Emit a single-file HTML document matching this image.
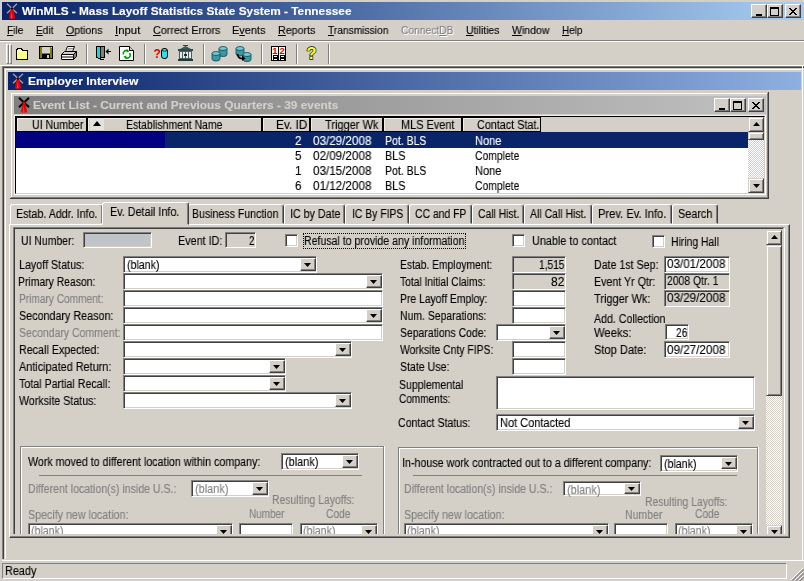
<!DOCTYPE html>
<html><head><meta charset="utf-8"><title>WinMLS</title>
<style>
html,body{margin:0;padding:0}
body{background:#d4d0c8;width:804px;height:581px;overflow:hidden;position:relative;font-family:"Liberation Sans",sans-serif;font-size:12px}
div,svg,i,.t{position:absolute;display:block}
.sk{box-sizing:border-box;border:1px solid;border-color:#808080 #fff #fff #808080;box-shadow:inset 1px 1px 0 #404040,inset -1px -1px 0 #d4d0c8}
.rb{box-sizing:border-box;background:#d4d0c8;border:1px solid;border-color:#fff #404040 #404040 #fff;box-shadow:inset -1px -1px 0 #808080}
.sb{box-sizing:border-box;background:#d4d0c8;border:1px solid;border-color:#d4d0c8 #404040 #404040 #d4d0c8;box-shadow:inset 1px 1px 0 #fff,inset -1px -1px 0 #808080}
.nb{border-bottom:0;box-shadow:inset 1px 1px 0 #fff,inset -1px 0 0 #808080}
.tab{box-sizing:border-box;border:1px solid;border-color:#fff #404040 transparent #fff;border-radius:3px 3px 0 0;box-shadow:inset -1px 0 0 #808080}
.t{white-space:nowrap;line-height:16px;height:16px;will-change:transform;-webkit-text-stroke:0.12px}
u{text-decoration:underline;text-underline-offset:1px}
</style></head>
<body>
<div style="left:2px;top:2px;width:802px;height:18px;background:linear-gradient(90deg,#0a246a 0%,#0a246a 2%,#a6caf0 98%)"></div>
<svg style="left:6px;top:3px" width="13" height="16" viewBox="0 0 13 16"><path d="M1 0.8L11 10.2M11 0.8L1 10.2" stroke="#a0a0a0" stroke-width="1.4"/><path d="M4.8 5.5L2.8 15.5H9.2L7.2 5.5Z" fill="#e80000"/><path d="M5.600 8L4.800 15.500H6.500Z" fill="#ff4040"/><rect x="5" y="4.500" width="2" height="2" fill="#200000"/></svg>
<span class="t" style="left:21.5px;top:3.0px;font-size:11.5px;color:#fff;font-weight:bold;transform:scaleX(1.028);transform-origin:0 0;">WinMLS - Mass Layoff Statistics State System - Tennessee</span>
<div class="rb" style="left:751px;top:4px;width:16px;height:14px"><i style="left:4px;top:9px;width:6px;height:2px;background:#000"></i></div>
<div class="rb" style="left:767px;top:4px;width:16px;height:14px"><i style="left:2px;top:2px;width:9px;height:9px;box-sizing:border-box;border:1px solid #000;border-top-width:2px"></i></div>
<div class="rb" style="left:785px;top:4px;width:16px;height:14px"><svg style="left:3px;top:3px" width="8" height="7" viewBox="0 0 8 7"><path d="M0 0L7 7M1 0L8 7M7 0L0 7M8 0L1 7" stroke="#000" stroke-width="1" shape-rendering="crispEdges"/></svg></div>
<span class="t" style="left:6.5px;top:22.0px;font-size:11px;color:#000;transform:scaleX(0.924);transform-origin:0 0;"><u>F</u>ile</span>
<span class="t" style="left:35.5px;top:22.0px;font-size:11px;color:#000;transform:scaleX(0.917);transform-origin:0 0;"><u>E</u>dit</span>
<span class="t" style="left:65.5px;top:22.0px;font-size:11px;color:#000;transform:scaleX(0.960);transform-origin:0 0;"><u>O</u>ptions</span>
<span class="t" style="left:114.5px;top:22.0px;font-size:11px;color:#000;transform:scaleX(1.037);transform-origin:0 0;"><u>I</u>nput</span>
<span class="t" style="left:152.5px;top:22.0px;font-size:11px;color:#000;transform:scaleX(0.976);transform-origin:0 0;"><u>C</u>orrect Errors</span>
<span class="t" style="left:231.5px;top:22.0px;font-size:11px;color:#000;transform:scaleX(0.993);transform-origin:0 0;">E<u>v</u>ents</span>
<span class="t" style="left:277.5px;top:22.0px;font-size:11px;color:#000;transform:scaleX(0.971);transform-origin:0 0;"><u>R</u>eports</span>
<span class="t" style="left:327.5px;top:22.0px;font-size:11px;color:#000;transform:scaleX(0.929);transform-origin:0 0;"><u>T</u>ransmission</span>
<span class="t" style="left:401.5px;top:23.0px;font-size:11px;color:#fff;transform:scaleX(0.931);transform-origin:0 0;">Connect<u>D</u>B</span>
<span class="t" style="left:400.5px;top:22.0px;font-size:11px;color:#808080;transform:scaleX(0.931);transform-origin:0 0;">Connect<u>D</u>B</span>
<span class="t" style="left:465.5px;top:22.0px;font-size:11px;color:#000;transform:scaleX(0.942);transform-origin:0 0;"><u>U</u>tilities</span>
<span class="t" style="left:511.5px;top:22.0px;font-size:11px;color:#000;transform:scaleX(0.956);transform-origin:0 0;"><u>W</u>indow</span>
<span class="t" style="left:561.5px;top:22.0px;font-size:11px;color:#000;transform:scaleX(0.901);transform-origin:0 0;"><u>H</u>elp</span>
<div style="left:0px;top:40px;width:804px;height:1px;background:#808080"></div>
<div style="left:0px;top:41px;width:804px;height:1px;background:#fff"></div>
<div style="left:6px;top:44px;width:3px;height:20px;background:#d4d0c8;border-left:1px solid #fff;border-top:1px solid #fff;border-right:1px solid #808080;border-bottom:1px solid #808080;box-sizing:border-box"></div>
<div style="left:9px;top:44px;width:3px;height:20px;background:#d4d0c8;border-left:1px solid #fff;border-top:1px solid #fff;border-right:1px solid #808080;border-bottom:1px solid #808080;box-sizing:border-box"></div>
<div style="left:86px;top:44px;width:1px;height:20px;background:#808080"></div>
<div style="left:87px;top:44px;width:1px;height:20px;background:#fff"></div>
<div style="left:144px;top:44px;width:1px;height:20px;background:#808080"></div>
<div style="left:145px;top:44px;width:1px;height:20px;background:#fff"></div>
<div style="left:203px;top:44px;width:1px;height:20px;background:#808080"></div>
<div style="left:204px;top:44px;width:1px;height:20px;background:#fff"></div>
<div style="left:261px;top:44px;width:1px;height:20px;background:#808080"></div>
<div style="left:262px;top:44px;width:1px;height:20px;background:#fff"></div>
<div style="left:296px;top:44px;width:1px;height:20px;background:#808080"></div>
<div style="left:297px;top:44px;width:1px;height:20px;background:#fff"></div>
<div style="left:328px;top:44px;width:1px;height:20px;background:#808080"></div>
<div style="left:329px;top:44px;width:1px;height:20px;background:#fff"></div>
<svg style="left:16px;top:48px" width="12" height="12" viewBox="0 0 12 12" shape-rendering="crispEdges"><path d="M0.5 2.5V11.5H11.5V2.5H6.5L5.5 0.5H1.5L0.5 2.5Z" fill="#ffff90" stroke="#000"/><path d="M1 3H6" stroke="#fff"/></svg>
<svg style="left:39px;top:46px" width="14" height="13" viewBox="0 0 14 13" shape-rendering="crispEdges"><rect x="0.5" y="0.5" width="13" height="12" fill="#808000" stroke="#000"/><rect x="3" y="1" width="8" height="6" fill="#d4d0c8"/><rect x="3" y="8" width="8" height="4" fill="#000"/><rect x="8" y="9" width="2" height="3" fill="#d4d0c8"/><rect x="12" y="1" width="1" height="1" fill="#d4d0c8"/></svg>
<svg style="left:61px;top:46px" width="17" height="14" viewBox="0 0 17 14"><path d="M4.5 5.5L6.5 0.5H13.5L11.5 5.5Z" fill="#fff" stroke="#000"/><path d="M7 2.5H12M6.5 4H11" stroke="#808080" stroke-width=".8"/><path d="M0.5 8.5L3.5 5.5H15.5L12.5 8.5Z" fill="#d4d0c8" stroke="#000"/><path d="M0.5 8.5H12.5V13.5H0.5Z" fill="#fff" stroke="#000"/><path d="M12.5 8.5L15.5 5.5V10.5L12.5 13.5Z" fill="#808080" stroke="#000"/><path d="M1 11H12" stroke="#000"/></svg>
<svg style="left:96px;top:46px" width="16" height="14" viewBox="0 0 16 14" shape-rendering="crispEdges"><path d="M0.5 0.5H8.5V11.5H0.5Z" fill="#808080" stroke="#000"/><path d="M1 1H4V13L1 11Z" fill="#00e0e0"/><path d="M4.5 1V13.5M1 11.5L4.5 13.5" stroke="#000" fill="none"/><path d="M4 13.5H8" stroke="#000"/><path d="M10 5.5H15" stroke="#000"/><path d="M9.500 5.500L12.500 2.500V8.500Z" fill="#000" shape-rendering="auto"/></svg>
<svg style="left:119px;top:46px" width="15" height="15" viewBox="0 0 15 15"><path d="M0.5 0.5H10.5L14.5 4.5V14.5H0.5Z" fill="#fff" stroke="#000"/><path d="M10.5 0.5V4.5H14.5" fill="#d4d0c8" stroke="#000"/><path d="M4.500 8.500A3 3 0 0 1 9 5M10.500 7A3 3 0 0 1 6 11" fill="none" stroke="#00a000" stroke-width="1.600"/><path d="M8 3L10.500 5.500L7.500 6.500ZM7 13L4.500 10.500L7.500 9.500Z" fill="#00a000"/></svg>
<svg style="left:154px;top:47px" width="15" height="13" viewBox="0 0 15 13"><text x="-0.5" y="10.5" font-family="Liberation Sans,sans-serif" font-weight="bold" font-size="12" fill="#e00000">?</text><rect x="7.5" y="1.5" width="6" height="10" rx="2.5" fill="#30e0e8" stroke="#000"/><path d="M8 3.5Q10.5 5 13 3.5" stroke="#000" fill="none" stroke-width=".7"/></svg>
<svg style="left:177px;top:45px" width="17" height="17" viewBox="0 0 17 17" shape-rendering="crispEdges"><rect x="6" y="0" width="5" height="1" fill="#2020ff"/><path d="M8.5 1L14 4H3Z" fill="#405858" shape-rendering="auto"/><rect x="1" y="4" width="15" height="2" fill="#304848"/><rect x="2" y="6" width="13" height="8" fill="#486060"/><rect x="3" y="7" width="2" height="6" fill="#e8e8e8"/><rect x="6" y="7" width="2" height="6" fill="#e8e8e8"/><rect x="9" y="7" width="2" height="6" fill="#e8e8e8"/><rect x="12" y="7" width="2" height="6" fill="#e8e8e8"/><rect x="7" y="9" width="3" height="2" fill="#203030"/><rect x="1" y="14" width="15" height="2" fill="#203838"/></svg>
<svg style="left:211px;top:45px" width="18" height="17" viewBox="0 0 18 17"><g stroke="#104850" stroke-width=".8"><path d="M8 3.500V9.5A4 2 0 0 0 16 9.500V3.500Z" fill="#3898a8"/><ellipse cx="12" cy="3.500" rx="4" ry="2" fill="#70c8d0"/><path d="M1 8.500V14A4 2 0 0 0 9 14V8.500Z" fill="#3898a8"/><ellipse cx="5" cy="8.500" rx="4" ry="2" fill="#70c8d0"/></g></svg>
<svg style="left:235px;top:45px" width="18" height="17" viewBox="0 0 18 17"><g stroke="#104850" stroke-width=".8"><path d="M1 3.500V9A4 2 0 0 0 9 9V3.500Z" fill="#3898a8"/><ellipse cx="5" cy="3.500" rx="4" ry="2" fill="#70c8d0"/><path d="M8 9.500V14.500A4 2 0 0 0 16 14.500V9.500Z" fill="#3898a8"/><ellipse cx="12" cy="9.500" rx="4" ry="2" fill="#70c8d0"/></g><path d="M2.500 9Q3 14 8 13.500" fill="none" stroke="#000" stroke-width="1.800"/><path d="M7 10.500L10.500 13.500L7 16Z" fill="#000"/></svg>
<svg style="left:271px;top:46px" width="15" height="15" viewBox="0 0 15 15" shape-rendering="crispEdges"><rect x="0" y="0" width="15" height="15" fill="#fff"/><path d="M0.5 0.500H14.500V14.500H0.500Z" fill="none" stroke="#000"/><path d="M7.500 1V14" stroke="#000"/><rect x="2" y="9" width="4" height="2" fill="none" stroke="#000"/><rect x="9" y="9" width="4" height="2" fill="none" stroke="#000"/><rect x="2" y="12" width="4" height="2" fill="none" stroke="#000"/><rect x="9" y="12" width="4" height="2" fill="none" stroke="#000"/><text x="1.200" y="8" font-family="Liberation Sans,sans-serif" font-weight="bold" font-size="9.5" fill="#e00000" shape-rendering="auto">1</text><text x="8.400" y="8" font-family="Liberation Sans,sans-serif" font-weight="bold" font-size="9.5" fill="#e00000" shape-rendering="auto">2</text></svg>
<svg style="left:305px;top:45px" width="14" height="16" viewBox="0 0 14 16"><text x="1.500" y="13.500" font-family="Liberation Sans,sans-serif" font-weight="bold" font-size="16.500" fill="#ffff40" stroke="#000" stroke-width="1.300" paint-order="stroke">?</text></svg>

<div style="left:0px;top:65px;width:804px;height:1px;background:#fff"></div>
<div style="left:2px;top:66px;width:802px;height:494px;background:#d4d0c8;box-sizing:border-box;border-top:1px solid #808080;border-left:1px solid #808080"></div>
<div style="left:3px;top:67px;width:801px;height:1px;background:#404040"></div>
<div style="left:3px;top:67px;width:1px;height:492px;background:#404040"></div>
<div style="left:2px;top:559px;width:802px;height:1px;background:#d4d0c8"></div>
<div style="left:2px;top:560px;width:802px;height:1px;background:#fff"></div>
<div style="left:5px;top:69px;width:797px;height:1px;background:#fff"></div>
<div style="left:5px;top:69px;width:1px;height:490px;background:#fff"></div>
<div style="left:802px;top:66px;width:1px;height:495px;background:#fff"></div>
<div style="left:8px;top:72px;width:793px;height:18px;background:linear-gradient(90deg,#0a246a 0%,#0a246a 1%,#8eb0e0 100%)"></div>
<svg style="left:12px;top:73px" width="13" height="16" viewBox="0 0 13 16"><path d="M1 0.8L11 10.2M11 0.8L1 10.2" stroke="#a0a0a0" stroke-width="1.4"/><path d="M4.8 5.5L2.8 15.5H9.2L7.2 5.5Z" fill="#e80000"/><path d="M5.600 8L4.800 15.500H6.500Z" fill="#ff4040"/><rect x="5" y="4.500" width="2" height="2" fill="#200000"/></svg>
<span class="t" style="left:27.5px;top:73.0px;font-size:11.5px;color:#fff;font-weight:bold;transform:scaleX(1.047);transform-origin:0 0;">Employer Interview</span>
<div style="left:10px;top:92px;width:759px;height:107px;background:#d4d0c8;box-sizing:border-box;border-right:1px solid #404040;border-bottom:1px solid #404040"></div>
<div style="left:11px;top:93px;width:756px;height:1px;background:#fff"></div>
<div style="left:11px;top:93px;width:1px;height:104px;background:#fff"></div>
<div style="left:11px;top:197px;width:757px;height:1px;background:#808080"></div>
<div style="left:767px;top:93px;width:1px;height:105px;background:#808080"></div>
<div style="left:14px;top:96px;width:752px;height:18px;background:linear-gradient(90deg,#808080,#c0c0c0)"></div>
<svg style="left:18px;top:97px" width="13" height="16" viewBox="0 0 13 16"><path d="M1 0.8L11 10.2M11 0.8L1 10.2" stroke="#000" stroke-width="2"/><path d="M4.8 5.5L2.8 15.5H9.2L7.2 5.5Z" fill="#e80000"/><path d="M5.600 8L4.800 15.500H6.500Z" fill="#ff4040"/><rect x="5" y="4.500" width="2" height="2" fill="#e00000"/></svg>
<span class="t" style="left:32.5px;top:97.0px;font-size:11.5px;color:#d4d0c8;font-weight:bold;transform:scaleX(1.032);transform-origin:0 0;">Event List - Current and Previous Quarters - 39 events</span>
<div class="rb" style="left:714px;top:98px;width:16px;height:14px"><i style="left:4px;top:9px;width:6px;height:2px;background:#000"></i></div>
<div class="rb" style="left:730px;top:98px;width:16px;height:14px"><i style="left:2px;top:2px;width:9px;height:9px;box-sizing:border-box;border:1px solid #000;border-top-width:2px"></i></div>
<div class="rb" style="left:748px;top:98px;width:16px;height:14px"><svg style="left:3px;top:3px" width="8" height="7" viewBox="0 0 8 7"><path d="M0 0L7 7M1 0L8 7M7 0L0 7M8 0L1 7" stroke="#000" stroke-width="1" shape-rendering="crispEdges"/></svg></div>
<div style="left:14px;top:115px;width:752px;height:80px;background:#fff;box-sizing:border-box;border-top:1px solid #f0eee8;border-left:1px solid #f0eee8;border-right:1px solid #fff;border-bottom:1px solid #fff"></div>
<div style="left:15px;top:116px;width:750px;height:78px;background:#fff;box-sizing:border-box;border-top:1px solid #000;border-left:1px solid #000;border-right:1px solid #d4d0c8;border-bottom:1px solid #d4d0c8"></div>
<div style="left:16px;top:117px;width:732px;height:15px;background:#d4d0c8"></div>
<div style="left:16px;top:117px;width:71px;height:15px;box-sizing:border-box;border:1px solid #000;box-shadow:inset 1px 1px 0 #f0eee8"></div>
<div style="left:87px;top:117px;width:175px;height:15px;box-sizing:border-box;border:1px solid #000;box-shadow:inset 1px 1px 0 #f0eee8"></div>
<div style="left:262px;top:117px;width:48px;height:15px;box-sizing:border-box;border:1px solid #000;box-shadow:inset 1px 1px 0 #f0eee8"></div>
<div style="left:310px;top:117px;width:73px;height:15px;box-sizing:border-box;border:1px solid #000;box-shadow:inset 1px 1px 0 #f0eee8"></div>
<div style="left:383px;top:117px;width:79px;height:15px;box-sizing:border-box;border:1px solid #000;box-shadow:inset 1px 1px 0 #f0eee8"></div>
<div style="left:462px;top:117px;width:79px;height:15px;box-sizing:border-box;border:1px solid #000;box-shadow:inset 1px 1px 0 #f0eee8"></div>
<div style="left:90px;top:118px;width:14px;height:12px;background:#e4e2dc"></div>
<svg style="left:93px;top:121px" width="8" height="5" viewBox="0 0 8 5"><path d="M0 5H8L4 0Z" fill="#000"/></svg>
<span class="t" style="left:31.5px;top:117.0px;font-size:12px;color:#000;transform:scaleX(0.886);transform-origin:0 0;">UI Number</span>
<span class="t" style="left:125.5px;top:117.0px;font-size:12px;color:#000;transform:scaleX(0.871);transform-origin:0 0;">Establishment Name</span>
<span class="t" style="left:275.5px;top:117.0px;font-size:12px;color:#000;transform:scaleX(0.988);transform-origin:0 0;">Ev. ID</span>
<span class="t" style="left:324.5px;top:117.0px;font-size:12px;color:#000;transform:scaleX(0.917);transform-origin:0 0;">Trigger Wk</span>
<span class="t" style="left:400.5px;top:117.0px;font-size:12px;color:#000;transform:scaleX(0.910);transform-origin:0 0;">MLS Event</span>
<span class="t" style="left:476.5px;top:117.0px;font-size:12px;color:#000;transform:scaleX(0.899);transform-origin:0 0;">Contact Stat.</span>
<div style="left:16px;top:132px;width:149px;height:16px;background:#000080"></div>
<div style="left:165px;top:132px;width:583px;height:16px;background:#0a246a"></div>
<span class="t" style="left:294.5px;top:133.0px;font-size:12px;color:#fff;transform:scaleX(0.957);transform-origin:0 0;">2</span>
<span class="t" style="left:312.5px;top:133.0px;font-size:12px;color:#fff;transform:scaleX(0.972);transform-origin:0 0;">03/29/2008</span>
<span class="t" style="left:384.5px;top:133.0px;font-size:12px;color:#fff;transform:scaleX(0.874);transform-origin:0 0;">Pot. BLS</span>
<span class="t" style="left:474.5px;top:133.0px;font-size:12px;color:#fff;transform:scaleX(0.920);transform-origin:0 0;">None</span>
<span class="t" style="left:294.5px;top:148.0px;font-size:12px;color:#000;transform:scaleX(0.957);transform-origin:0 0;">5</span>
<span class="t" style="left:312.5px;top:148.0px;font-size:12px;color:#000;transform:scaleX(0.972);transform-origin:0 0;">02/09/2008</span>
<span class="t" style="left:384.5px;top:148.0px;font-size:12px;color:#000;transform:scaleX(0.899);transform-origin:0 0;">BLS</span>
<span class="t" style="left:474.5px;top:148.0px;font-size:12px;color:#000;transform:scaleX(0.864);transform-origin:0 0;">Complete</span>
<span class="t" style="left:294.5px;top:163.0px;font-size:12px;color:#000;transform:scaleX(0.957);transform-origin:0 0;">1</span>
<span class="t" style="left:312.5px;top:163.0px;font-size:12px;color:#000;transform:scaleX(0.972);transform-origin:0 0;">03/15/2008</span>
<span class="t" style="left:384.5px;top:163.0px;font-size:12px;color:#000;transform:scaleX(0.874);transform-origin:0 0;">Pot. BLS</span>
<span class="t" style="left:474.5px;top:163.0px;font-size:12px;color:#000;transform:scaleX(0.920);transform-origin:0 0;">None</span>
<span class="t" style="left:294.5px;top:178.0px;font-size:12px;color:#000;transform:scaleX(0.957);transform-origin:0 0;">6</span>
<span class="t" style="left:312.5px;top:178.0px;font-size:12px;color:#000;transform:scaleX(0.972);transform-origin:0 0;">01/12/2008</span>
<span class="t" style="left:384.5px;top:178.0px;font-size:12px;color:#000;transform:scaleX(0.899);transform-origin:0 0;">BLS</span>
<span class="t" style="left:474.5px;top:178.0px;font-size:12px;color:#000;transform:scaleX(0.864);transform-origin:0 0;">Complete</span>
<div style="left:748px;top:117px;width:16px;height:76px;background:repeating-conic-gradient(#fff 0 25%,#d4d0c8 0 50%) 0 0/2px 2px"></div>
<div class="sb" style="left:748px;top:117px;width:16px;height:15px"></div>
<svg style="left:753px;top:122px" width="7" height="4" viewBox="0 0 7 4"><path d="M0 4H7L3.5 0Z" fill="#000"/></svg>
<div class="sb" style="left:748px;top:132px;width:16px;height:8px"></div>
<div class="sb" style="left:748px;top:178px;width:16px;height:15px"></div>
<svg style="left:753px;top:184px" width="7" height="4" viewBox="0 0 7 4"><path d="M0 0H7L3.5 4Z" fill="#000"/></svg>
<div style="left:9px;top:224px;width:781px;height:314px;background:#d4d0c8;box-sizing:border-box;border-top:1px solid #fff;border-left:1px solid #fff;border-right:1px solid #404040;border-bottom:1px solid #404040"></div>
<div style="left:788px;top:225px;width:1px;height:312px;background:#808080"></div>
<div style="left:10px;top:536px;width:779px;height:1px;background:#808080"></div>
<div class="tab" style="left:10px;top:204px;width:93px;height:20px"></div>
<span class="t" style="left:15.5px;top:206.0px;font-size:12px;color:#000;transform:scaleX(0.891);transform-origin:0 0;">Estab. Addr. Info.</span>
<div class="tab" style="left:188px;top:204px;width:96px;height:20px"></div>
<span class="t" style="left:191.5px;top:206.0px;font-size:12px;color:#000;transform:scaleX(0.881);transform-origin:0 0;">Business Function</span>
<div class="tab" style="left:284px;top:204px;width:61px;height:20px"></div>
<span class="t" style="left:289.5px;top:206.0px;font-size:12px;color:#000;transform:scaleX(0.889);transform-origin:0 0;">IC by Date</span>
<div class="tab" style="left:345px;top:204px;width:64px;height:20px"></div>
<span class="t" style="left:351.5px;top:206.0px;font-size:12px;color:#000;transform:scaleX(0.866);transform-origin:0 0;">IC By FIPS</span>
<div class="tab" style="left:409px;top:204px;width:63px;height:20px"></div>
<span class="t" style="left:414.5px;top:206.0px;font-size:12px;color:#000;transform:scaleX(0.866);transform-origin:0 0;">CC and FP</span>
<div class="tab" style="left:472px;top:204px;width:52px;height:20px"></div>
<span class="t" style="left:477.5px;top:206.0px;font-size:12px;color:#000;transform:scaleX(0.862);transform-origin:0 0;">Call Hist.</span>
<div class="tab" style="left:524px;top:204px;width:68px;height:20px"></div>
<span class="t" style="left:529.5px;top:206.0px;font-size:12px;color:#000;transform:scaleX(0.872);transform-origin:0 0;">All Call Hist.</span>
<div class="tab" style="left:592px;top:204px;width:80px;height:20px"></div>
<span class="t" style="left:597.5px;top:206.0px;font-size:12px;color:#000;transform:scaleX(0.929);transform-origin:0 0;">Prev. Ev. Info.</span>
<div class="tab" style="left:672px;top:204px;width:46px;height:20px"></div>
<span class="t" style="left:677.5px;top:206.0px;font-size:12px;color:#000;transform:scaleX(0.905);transform-origin:0 0;">Search</span>
<div class="tab" style="left:102px;top:202px;width:87px;height:23px;background:#d4d0c8"></div>
<span class="t" style="left:109.5px;top:204.0px;font-size:12px;color:#000;transform:scaleX(0.899);transform-origin:0 0;">Ev. Detail Info.</span>
<div style="left:13px;top:227px;width:772px;height:307px;overflow:hidden;box-sizing:border-box;border-top:1px solid #808080;border-left:1px solid #808080;border-right:1px solid #fff"></div>
<div style="left:14px;top:228px;width:769px;height:1px;background:#404040"></div>
<div style="left:14px;top:228px;width:1px;height:306px;background:#404040"></div>
<div style="left:783px;top:228px;width:1px;height:306px;background:#d4d0c8"></div>
<div style="left:766px;top:230px;width:16px;height:304px;background:repeating-conic-gradient(#fff 0 25%,#d4d0c8 0 50%) 0 0/2px 2px"></div>
<div class="sb" style="left:766px;top:230px;width:16px;height:15px"></div>
<svg style="left:771px;top:235px" width="7" height="4" viewBox="0 0 7 4"><path d="M0 4H7L3.5 0Z" fill="#000"/></svg>
<div class="sb" style="left:766px;top:245px;width:16px;height:151px"></div>
<div class="sb nb" style="left:766px;top:525px;width:16px;height:9px"></div>
<svg style="left:771px;top:530px" width="7" height="4" viewBox="0 0 7 4"><path d="M0 0H7L3.5 4Z" fill="#000"/></svg>
<span class="t" style="left:20.5px;top:233.0px;font-size:12px;color:#000;transform:scaleX(0.870);transform-origin:0 0;">UI Number:</span>
<div class="sk" style="left:83px;top:232px;width:69px;height:16px;background-color:#c0c3c7;"></div>
<span class="t" style="left:177.5px;top:233.0px;font-size:12px;color:#000;transform:scaleX(0.900);transform-origin:0 0;">Event ID:</span>
<div class="sk" style="left:225px;top:232px;width:31px;height:16px;background-color:#d4d0c8;"></div>
<span class="t" style="left:248.5px;top:233.0px;font-size:12px;color:#000;transform:scaleX(0.807);transform-origin:0 0;">2</span>
<div class="sk" style="left:285px;top:234px;width:13px;height:13px;background-color:#fff;"></div>
<span class="t" style="left:303.5px;top:233.0px;font-size:12px;color:#000;transform:scaleX(0.881);transform-origin:0 0;">Refusal to provide any information</span>
<div style="left:303px;top:233px;width:163px;height:16px;box-sizing:border-box;border:1px dotted #000"></div>
<div class="sk" style="left:512px;top:234px;width:13px;height:13px;background-color:#fff;"></div>
<span class="t" style="left:531.5px;top:233.0px;font-size:12px;color:#000;transform:scaleX(0.904);transform-origin:0 0;">Unable to contact</span>
<div class="sk" style="left:652px;top:235px;width:13px;height:13px;background-color:#fff;"></div>
<span class="t" style="left:671.0px;top:234.0px;font-size:12px;color:#000;transform:scaleX(0.865);transform-origin:0 0;">Hiring Hall</span>
<span class="t" style="left:18.5px;top:257.0px;font-size:12px;color:#000;transform:scaleX(0.894);transform-origin:0 0;">Layoff Status:</span>
<span class="t" style="left:17.5px;top:274.0px;font-size:12px;color:#000;transform:scaleX(0.866);transform-origin:0 0;">Primary Reason:</span>
<span class="t" style="left:18.5px;top:291.0px;font-size:12px;color:#808080;transform:scaleX(0.844);transform-origin:0 0;">Primary Comment:</span>
<span class="t" style="left:18.5px;top:308.0px;font-size:12px;color:#000;transform:scaleX(0.896);transform-origin:0 0;">Secondary Reason:</span>
<span class="t" style="left:18.5px;top:325.0px;font-size:12px;color:#808080;transform:scaleX(0.874);transform-origin:0 0;">Secondary Comment:</span>
<span class="t" style="left:18.5px;top:342.0px;font-size:12px;color:#000;transform:scaleX(0.893);transform-origin:0 0;">Recall Expected:</span>
<span class="t" style="left:18.5px;top:359.0px;font-size:12px;color:#000;transform:scaleX(0.905);transform-origin:0 0;">Anticipated Return:</span>
<span class="t" style="left:18.5px;top:376.0px;font-size:12px;color:#000;transform:scaleX(0.890);transform-origin:0 0;">Total Partial Recall:</span>
<span class="t" style="left:18.5px;top:393.0px;font-size:12px;color:#000;transform:scaleX(0.888);transform-origin:0 0;">Worksite Status:</span>
<div class="sk" style="left:123px;top:256px;width:194px;height:17px;background-color:#fff;"></div>
<div class="rb" style="left:300px;top:258px;width:16px;height:13px"></div>
<svg style="left:304px;top:263px" width="7" height="4" viewBox="0 0 7 4"><path d="M0 0H7L3.5 4Z" fill="#000"/></svg>
<span class="t" style="left:126.5px;top:256.5px;font-size:12px;color:#000;transform:scaleX(0.883);transform-origin:0 0;">(blank)</span>
<div class="sk" style="left:123px;top:273px;width:260px;height:17px;background-color:#fff;"></div>
<div class="rb" style="left:366px;top:275px;width:16px;height:13px"></div>
<svg style="left:370px;top:280px" width="7" height="4" viewBox="0 0 7 4"><path d="M0 0H7L3.5 4Z" fill="#000"/></svg>
<div class="sk" style="left:123px;top:290px;width:260px;height:17px;background-color:#fff;"></div>
<div class="sk" style="left:123px;top:307px;width:260px;height:17px;background-color:#fff;"></div>
<div class="rb" style="left:366px;top:309px;width:16px;height:13px"></div>
<svg style="left:370px;top:314px" width="7" height="4" viewBox="0 0 7 4"><path d="M0 0H7L3.5 4Z" fill="#000"/></svg>
<div class="sk" style="left:123px;top:324px;width:260px;height:17px;background-color:#fff;"></div>
<div class="sk" style="left:123px;top:341px;width:229px;height:17px;background-color:#fff;"></div>
<div class="rb" style="left:335px;top:343px;width:16px;height:13px"></div>
<svg style="left:339px;top:348px" width="7" height="4" viewBox="0 0 7 4"><path d="M0 0H7L3.5 4Z" fill="#000"/></svg>
<div class="sk" style="left:123px;top:358px;width:163px;height:17px;background-color:#fff;"></div>
<div class="rb" style="left:269px;top:360px;width:16px;height:13px"></div>
<svg style="left:273px;top:365px" width="7" height="4" viewBox="0 0 7 4"><path d="M0 0H7L3.5 4Z" fill="#000"/></svg>
<div class="sk" style="left:123px;top:375px;width:163px;height:17px;background-color:#fff;"></div>
<div class="rb" style="left:269px;top:377px;width:16px;height:13px"></div>
<svg style="left:273px;top:382px" width="7" height="4" viewBox="0 0 7 4"><path d="M0 0H7L3.5 4Z" fill="#000"/></svg>
<div class="sk" style="left:123px;top:392px;width:229px;height:17px;background-color:#fff;"></div>
<div class="rb" style="left:335px;top:394px;width:16px;height:13px"></div>
<svg style="left:339px;top:399px" width="7" height="4" viewBox="0 0 7 4"><path d="M0 0H7L3.5 4Z" fill="#000"/></svg>
<span class="t" style="left:399.5px;top:257.0px;font-size:12px;color:#000;transform:scaleX(0.860);transform-origin:0 0;">Estab. Employment:</span>
<span class="t" style="left:399.5px;top:274.0px;font-size:12px;color:#000;transform:scaleX(0.854);transform-origin:0 0;">Total Initial Claims:</span>
<span class="t" style="left:399.5px;top:291.0px;font-size:12px;color:#000;transform:scaleX(0.864);transform-origin:0 0;">Pre Layoff Employ:</span>
<span class="t" style="left:399.5px;top:308.0px;font-size:12px;color:#000;transform:scaleX(0.869);transform-origin:0 0;">Num. Separations:</span>
<span class="t" style="left:399.5px;top:325.0px;font-size:12px;color:#000;transform:scaleX(0.869);transform-origin:0 0;">Separations Code:</span>
<span class="t" style="left:399.5px;top:342.0px;font-size:12px;color:#000;transform:scaleX(0.866);transform-origin:0 0;">Worksite Cnty FIPS:</span>
<span class="t" style="left:399.5px;top:359.0px;font-size:12px;color:#000;transform:scaleX(0.882);transform-origin:0 0;">State Use:</span>
<div class="sk" style="left:512px;top:256px;width:54px;height:17px;background-color:#d4d0c8;"></div>
<span class="t" style="left:538.5px;top:257.0px;font-size:12px;color:#000;transform:scaleX(0.846);transform-origin:0 0;">1,515</span>
<div class="sk" style="left:512px;top:273px;width:54px;height:17px;background-color:#d4d0c8;"></div>
<span class="t" style="left:550.5px;top:274.0px;font-size:12px;color:#000;transform:scaleX(1.003);transform-origin:0 0;">82</span>
<div class="sk" style="left:512px;top:290px;width:54px;height:17px;background-color:#fff;"></div>
<div class="sk" style="left:512px;top:307px;width:54px;height:17px;background-color:#fff;"></div>
<div class="sk" style="left:496px;top:324px;width:70px;height:17px;background-color:#fff;"></div>
<div class="rb" style="left:549px;top:326px;width:16px;height:13px"></div>
<svg style="left:553px;top:331px" width="7" height="4" viewBox="0 0 7 4"><path d="M0 0H7L3.5 4Z" fill="#000"/></svg>
<div class="sk" style="left:512px;top:341px;width:54px;height:17px;background-color:#fff;"></div>
<div class="sk" style="left:512px;top:358px;width:54px;height:17px;background-color:#fff;"></div>
<span class="t" style="left:398.5px;top:377.0px;font-size:12px;color:#000;transform:scaleX(0.877);transform-origin:0 0;">Supplemental</span>
<span class="t" style="left:398.5px;top:391.0px;font-size:12px;color:#000;transform:scaleX(0.838);transform-origin:0 0;">Comments:</span>
<div class="sk" style="left:496px;top:376px;width:259px;height:34px;background-color:#fff;"></div>
<span class="t" style="left:397.5px;top:415.0px;font-size:12px;color:#000;transform:scaleX(0.882);transform-origin:0 0;">Contact Status:</span>
<div class="sk" style="left:496px;top:414px;width:259px;height:17px;background-color:#fff;"></div>
<div class="rb" style="left:738px;top:416px;width:16px;height:13px"></div>
<svg style="left:742px;top:421px" width="7" height="4" viewBox="0 0 7 4"><path d="M0 0H7L3.5 4Z" fill="#000"/></svg>
<span class="t" style="left:499.5px;top:414.5px;font-size:12px;color:#000;transform:scaleX(0.918);transform-origin:0 0;">Not Contacted</span>
<span class="t" style="left:593.5px;top:257.0px;font-size:12px;color:#000;transform:scaleX(0.886);transform-origin:0 0;">Date 1st Sep:</span>
<div class="sk" style="left:664px;top:256px;width:66px;height:17px;background-color:#fff;"></div>
<span class="t" style="left:666.5px;top:256.0px;font-size:12px;color:#000;transform:scaleX(0.972);transform-origin:0 0;">03/01/2008</span>
<span class="t" style="left:593.5px;top:274.0px;font-size:12px;color:#000;transform:scaleX(0.888);transform-origin:0 0;">Event Yr Qtr:</span>
<div class="sk" style="left:664px;top:273px;width:66px;height:17px;background-color:#d4d0c8;"></div>
<span class="t" style="left:666.5px;top:273.0px;font-size:12px;color:#000;transform:scaleX(0.866);transform-origin:0 0;">2008 Qtr. 1</span>
<span class="t" style="left:593.5px;top:291.0px;font-size:12px;color:#000;transform:scaleX(0.916);transform-origin:0 0;">Trigger Wk:</span>
<div class="sk" style="left:664px;top:290px;width:66px;height:17px;background-color:#d4d0c8;"></div>
<span class="t" style="left:666.5px;top:290.0px;font-size:12px;color:#000;transform:scaleX(0.972);transform-origin:0 0;">03/29/2008</span>
<span class="t" style="left:593.5px;top:311.0px;font-size:12px;color:#000;transform:scaleX(0.885);transform-origin:0 0;">Add. Collection</span>
<span class="t" style="left:593.5px;top:325.0px;font-size:12px;color:#000;transform:scaleX(0.940);transform-origin:0 0;">Weeks:</span>
<div class="sk" style="left:665px;top:324px;width:24px;height:16px;background-color:#fff;"></div>
<span class="t" style="left:675.5px;top:325.0px;font-size:12px;color:#000;transform:scaleX(0.853);transform-origin:0 0;">26</span>
<span class="t" style="left:593.5px;top:342.0px;font-size:12px;color:#000;transform:scaleX(0.924);transform-origin:0 0;">Stop Date:</span>
<div class="sk" style="left:664px;top:341px;width:66px;height:17px;background-color:#fff;"></div>
<span class="t" style="left:666.5px;top:342.0px;font-size:12px;color:#000;transform:scaleX(0.972);transform-origin:0 0;">09/27/2008</span>
<div style="left:20px;top:446px;width:364px;height:1px;background:#808080"></div>
<div style="left:21px;top:447px;width:363px;height:1px;background:#fff"></div>
<div style="left:20px;top:446px;width:1px;height:88px;background:#808080"></div>
<div style="left:21px;top:447px;width:1px;height:87px;background:#fff"></div>
<div style="left:383px;top:447px;width:1px;height:87px;background:#808080"></div>
<div style="left:384px;top:446px;width:1px;height:88px;background:#fff"></div>
<div style="left:398px;top:447px;width:360px;height:1px;background:#808080"></div>
<div style="left:399px;top:448px;width:359px;height:1px;background:#fff"></div>
<div style="left:398px;top:447px;width:1px;height:87px;background:#808080"></div>
<div style="left:399px;top:448px;width:1px;height:86px;background:#fff"></div>
<div style="left:757px;top:448px;width:1px;height:86px;background:#808080"></div>
<div style="left:758px;top:447px;width:1px;height:87px;background:#fff"></div>
<span class="t" style="left:27.5px;top:454.0px;font-size:12px;color:#000;transform:scaleX(0.890);transform-origin:0 0;">Work moved to different location within company:</span>
<div class="sk" style="left:281px;top:453px;width:78px;height:17px;background-color:#fff;"></div>
<div class="rb" style="left:342px;top:455px;width:16px;height:13px"></div>
<svg style="left:346px;top:460px" width="7" height="4" viewBox="0 0 7 4"><path d="M0 0H7L3.5 4Z" fill="#000"/></svg>
<span class="t" style="left:284.5px;top:453.5px;font-size:12px;color:#000;transform:scaleX(0.910);transform-origin:0 0;">(blank)</span>
<div style="left:39px;top:475px;width:323px;height:1px;background:#808080"></div>
<span class="t" style="left:27.5px;top:480.5px;font-size:12px;color:#808080;transform:scaleX(0.881);transform-origin:0 0;">Different location(s) inside U.S.:</span>
<div class="sk" style="left:191px;top:480px;width:78px;height:17px;background-color:#fff;"></div>
<div class="rb" style="left:252px;top:482px;width:16px;height:13px"></div>
<svg style="left:256px;top:487px" width="7" height="4" viewBox="0 0 7 4"><path d="M0 0H7L3.5 4Z" fill="#000"/></svg>
<span class="t" style="left:194.5px;top:480.5px;font-size:12px;color:#808080;transform:scaleX(0.910);transform-origin:0 0;">(blank)</span>
<span class="t" style="left:271.5px;top:491.5px;font-size:12px;color:#808080;transform:scaleX(0.866);transform-origin:0 0;">Resulting Layoffs:</span>
<span class="t" style="left:27.5px;top:506.5px;font-size:12px;color:#808080;transform:scaleX(0.891);transform-origin:0 0;">Specify new location:</span>
<span class="t" style="left:248.5px;top:505.5px;font-size:12px;color:#808080;transform:scaleX(0.829);transform-origin:0 0;">Number</span>
<span class="t" style="left:325.5px;top:505.5px;font-size:12px;color:#808080;transform:scaleX(0.851);transform-origin:0 0;">Code</span>
<div style="left:15px;top:522px;width:751px;height:12px;overflow:hidden">
<div class="sk" style="left:13px;top:1px;width:205px;height:17px;background-color:#fff;"></div>
<div class="rb" style="left:201px;top:3px;width:16px;height:13px"></div>
<svg style="left:205px;top:8px" width="7" height="4" viewBox="0 0 7 4"><path d="M0 0H7L3.5 4Z" fill="#000"/></svg>
<span class="t" style="left:16.0px;top:0.5px;font-size:12px;color:#808080;transform:scaleX(0.883);transform-origin:0 0;">(blank)</span>
<div class="sk" style="left:224px;top:1px;width:54px;height:17px;background-color:#fff;"></div>
<div class="sk" style="left:285px;top:1px;width:78px;height:17px;background-color:#fff;"></div>
<div class="rb" style="left:346px;top:3px;width:16px;height:13px"></div>
<svg style="left:350px;top:8px" width="7" height="4" viewBox="0 0 7 4"><path d="M0 0H7L3.5 4Z" fill="#000"/></svg>
<span class="t" style="left:288.0px;top:0.5px;font-size:12px;color:#808080;transform:scaleX(0.883);transform-origin:0 0;">(blank)</span>
<div class="sk" style="left:389px;top:1px;width:205px;height:17px;background-color:#fff;"></div>
<div class="rb" style="left:577px;top:3px;width:16px;height:13px"></div>
<svg style="left:581px;top:8px" width="7" height="4" viewBox="0 0 7 4"><path d="M0 0H7L3.5 4Z" fill="#000"/></svg>
<span class="t" style="left:392.0px;top:0.5px;font-size:12px;color:#808080;transform:scaleX(0.883);transform-origin:0 0;">(blank)</span>
<div class="sk" style="left:599px;top:1px;width:54px;height:17px;background-color:#fff;"></div>
<div class="sk" style="left:660px;top:1px;width:78px;height:17px;background-color:#fff;"></div>
<div class="rb" style="left:721px;top:3px;width:16px;height:13px"></div>
<svg style="left:725px;top:8px" width="7" height="4" viewBox="0 0 7 4"><path d="M0 0H7L3.5 4Z" fill="#000"/></svg>
<span class="t" style="left:663.0px;top:0.5px;font-size:12px;color:#808080;transform:scaleX(0.883);transform-origin:0 0;">(blank)</span>
</div>
<span class="t" style="left:401.5px;top:455.0px;font-size:12px;color:#000;transform:scaleX(0.891);transform-origin:0 0;">In-house work contracted out to a different company:</span>
<div class="sk" style="left:660px;top:455px;width:78px;height:17px;background-color:#fff;"></div>
<div class="rb" style="left:721px;top:457px;width:16px;height:12px"></div>
<svg style="left:725px;top:462px" width="7" height="4" viewBox="0 0 7 4"><path d="M0 0H7L3.5 4Z" fill="#000"/></svg>
<span class="t" style="left:663.5px;top:455.5px;font-size:12px;color:#000;transform:scaleX(0.883);transform-origin:0 0;">(blank)</span>
<div style="left:413px;top:475px;width:324px;height:1px;background:#808080"></div>
<span class="t" style="left:403.5px;top:480.5px;font-size:12px;color:#808080;transform:scaleX(0.881);transform-origin:0 0;">Different location(s) inside U.S.:</span>
<div class="sk" style="left:563px;top:481px;width:78px;height:15px;background-color:#fff;"></div>
<div class="rb" style="left:624px;top:483px;width:16px;height:11px"></div>
<svg style="left:628px;top:487px" width="7" height="4" viewBox="0 0 7 4"><path d="M0 0H7L3.5 4Z" fill="#000"/></svg>
<span class="t" style="left:566.5px;top:481.5px;font-size:12px;color:#808080;transform:scaleX(0.910);transform-origin:0 0;">(blank)</span>
<span class="t" style="left:644.5px;top:493.5px;font-size:12px;color:#808080;transform:scaleX(0.866);transform-origin:0 0;">Resulting Layoffs:</span>
<span class="t" style="left:403.5px;top:507.0px;font-size:12px;color:#808080;transform:scaleX(0.891);transform-origin:0 0;">Specify new location:</span>
<span class="t" style="left:624.5px;top:506.5px;font-size:12px;color:#808080;transform:scaleX(0.876);transform-origin:0 0;">Number</span>
<span class="t" style="left:694.5px;top:506.0px;font-size:12px;color:#808080;transform:scaleX(0.851);transform-origin:0 0;">Code</span>
<div style="left:2px;top:563px;width:785px;height:16px;box-sizing:border-box;border-top:1px solid #808080;border-left:1px solid #808080;border-right:1px solid #fff;border-bottom:1px solid #fff"></div>
<span class="t" style="left:4.5px;top:563.0px;font-size:12px;color:#000;transform:scaleX(0.905);transform-origin:0 0;">Ready</span>
<svg style="left:790px;top:567px" width="14" height="14" viewBox="0 0 14 14"><path d="M13 1L1 13M13 5L5 13M13 9L9 13" stroke="#fff" stroke-width="1"/><path d="M14 1.5L1.5 14M14 2.5L2.5 14M14 5.5L5.5 14M14 6.5L6.5 14M14 9.5L9.5 14M14 10.5L10.5 14" stroke="#808080" stroke-width="1"/></svg>
</body></html>
